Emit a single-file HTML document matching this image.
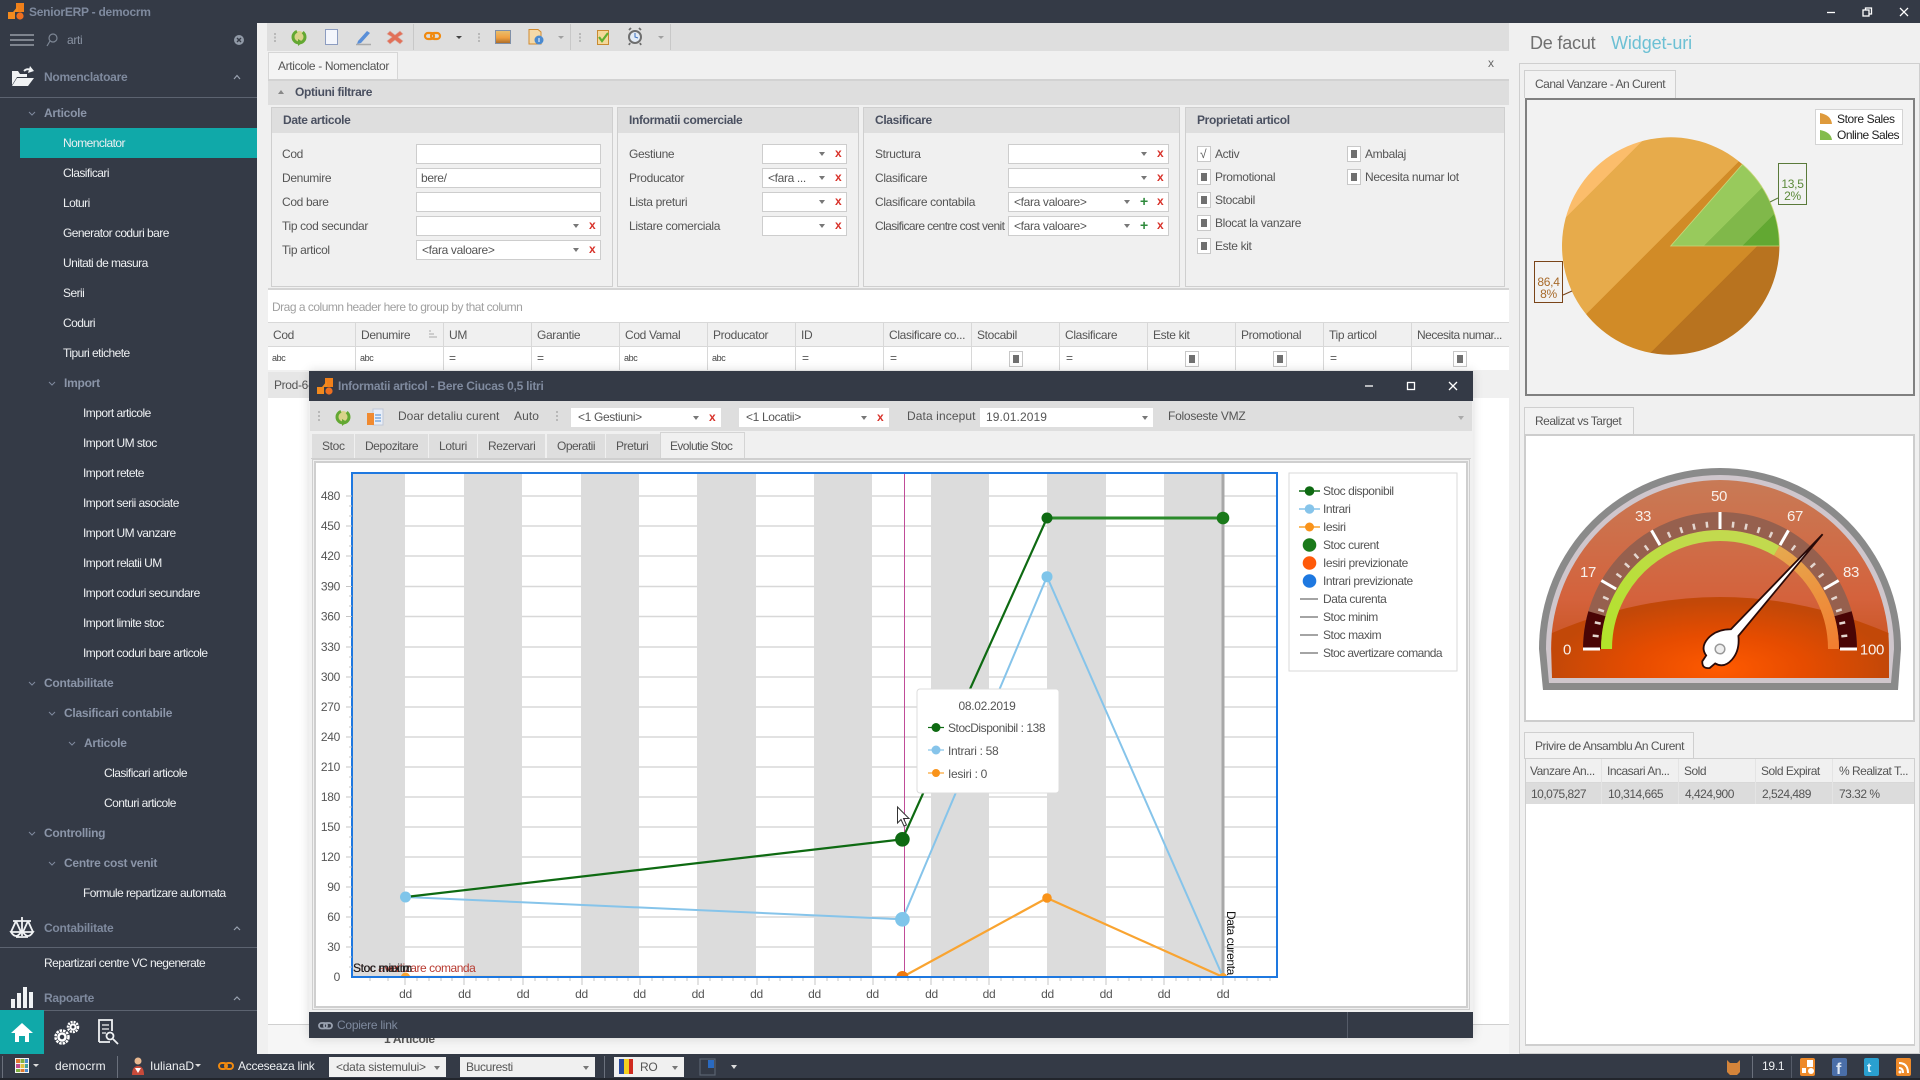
<!DOCTYPE html>
<html><head><meta charset="utf-8"><title>SeniorERP - democrm</title>
<style>
html,body{margin:0;padding:0;width:1920px;height:1080px;overflow:hidden;background:#343a46;font-family:"Liberation Sans",sans-serif}
.b{position:absolute;box-sizing:border-box}
.t{position:absolute;white-space:nowrap;line-height:16px;font-size:12px;letter-spacing:-.35px;color:#555}
.s{color:#eef0f2;letter-spacing:-.55px}
.u{color:#eef0f2;letter-spacing:-.25px}
.w{letter-spacing:-.5px}
.h{color:#7f8a9e;font-weight:bold;letter-spacing:-.25px}
.i{position:absolute;box-sizing:border-box;background:#fff;border:1px solid #cdcdcd;height:20px}
.a{position:absolute;width:0;height:0;border-left:3px solid transparent;border-right:3px solid transparent;border-top:4px solid #777}
.x{position:absolute;color:#d8322a;font-weight:bold;font-size:12px;line-height:16px}
.p{position:absolute;color:#2f8a3c;font-weight:bold;font-size:14px;line-height:16px}
.c{position:absolute;box-sizing:border-box;width:14px;height:16px;background:#fff;border:1px solid #c8c8c8}
.c:after{content:"";position:absolute;left:3px;top:3px;width:6px;height:8px;background:#707070}
.c.n:after{display:none}
svg{position:absolute;left:0;top:0}
svg text{font-family:"Liberation Sans",sans-serif;letter-spacing:-.3px}
</style></head><body>

<!-- main -->
<div class="b" style="left:257px;top:23px;width:1253px;height:1031px;background:#f0f0f0"></div>
<div class="b" style="left:267px;top:23px;width:1242px;height:28px;background:#dedede"></div>
<div class="b" style="left:268px;top:52px;width:130px;height:28px;background:#f4f4f4;border:1px solid #d6d6d6;border-bottom:0"></div>
<div class="t" style="left:278px;top:58px">Articole - Nomenclator</div>
<div class="t" style="left:1488px;top:55px;color:#666">x</div>
<div class="b" style="left:268px;top:79px;width:1241px;height:26px;background:#dedede;border-top:2px solid #d2d2d2"></div>
<div class="t" style="left:295px;top:84px;font-weight:bold;color:#4a5060">Optiuni filtrare</div>
<div class="b" style="left:278px;top:90px;border-left:3px solid transparent;border-right:3px solid transparent;border-bottom:4px solid #888"></div>
<div class="b" style="left:268px;top:105px;width:1241px;height:185px;background:#f0f0f0;border-bottom:2px solid #d4d4d4"></div>

<!-- group panels -->
<div class="b" style="left:271px;top:107px;width:342px;height:180px;border:1px solid #cfcfcf"></div>
<div class="b" style="left:272px;top:108px;width:340px;height:25px;background:#dedede"></div>
<div class="t" style="left:283px;top:112px;font-weight:bold;color:#4a5060">Date articole</div>
<div class="b" style="left:617px;top:107px;width:242px;height:180px;border:1px solid #cfcfcf"></div>
<div class="b" style="left:618px;top:108px;width:240px;height:25px;background:#dedede"></div>
<div class="t" style="left:629px;top:112px;font-weight:bold;color:#4a5060">Informatii comerciale</div>
<div class="b" style="left:863px;top:107px;width:317px;height:180px;border:1px solid #cfcfcf"></div>
<div class="b" style="left:864px;top:108px;width:315px;height:25px;background:#dedede"></div>
<div class="t" style="left:875px;top:112px;font-weight:bold;color:#4a5060">Clasificare</div>
<div class="b" style="left:1185px;top:107px;width:320px;height:180px;border:1px solid #cfcfcf"></div>
<div class="b" style="left:1186px;top:108px;width:318px;height:25px;background:#dedede"></div>
<div class="t" style="left:1197px;top:112px;font-weight:bold;color:#4a5060">Proprietati articol</div>

<!-- Date articole -->
<div class="t" style="left:282px;top:146px">Cod</div><div class="i" style="left:416px;top:144px;width:185px"></div>
<div class="t" style="left:282px;top:170px">Denumire</div><div class="i" style="left:416px;top:168px;width:185px"></div><div class="t" style="left:421px;top:170px">bere/</div>
<div class="t" style="left:282px;top:194px">Cod bare</div><div class="i" style="left:416px;top:192px;width:185px"></div>
<div class="t" style="left:282px;top:218px">Tip cod secundar</div><div class="i" style="left:416px;top:216px;width:185px"></div><div class="a" style="left:573px;top:224px"></div><div class="x" style="left:589px;top:217px">x</div>
<div class="t" style="left:282px;top:242px">Tip articol</div><div class="i" style="left:416px;top:240px;width:185px"></div><div class="t" style="left:422px;top:242px">&lt;fara valoare&gt;</div><div class="a" style="left:573px;top:248px"></div><div class="x" style="left:589px;top:241px">x</div>

<!-- Informatii -->
<div class="t" style="left:629px;top:146px">Gestiune</div><div class="i" style="left:762px;top:144px;width:85px"></div><div class="a" style="left:819px;top:152px"></div><div class="x" style="left:835px;top:145px">x</div>
<div class="t" style="left:629px;top:170px">Producator</div><div class="i" style="left:762px;top:168px;width:85px"></div><div class="t" style="left:768px;top:170px">&lt;fara ...</div><div class="a" style="left:819px;top:176px"></div><div class="x" style="left:835px;top:169px">x</div>
<div class="t" style="left:629px;top:194px">Lista preturi</div><div class="i" style="left:762px;top:192px;width:85px"></div><div class="a" style="left:819px;top:200px"></div><div class="x" style="left:835px;top:193px">x</div>
<div class="t" style="left:629px;top:218px">Listare comerciala</div><div class="i" style="left:762px;top:216px;width:85px"></div><div class="a" style="left:819px;top:224px"></div><div class="x" style="left:835px;top:217px">x</div>

<!-- Clasificare -->
<div class="t" style="left:875px;top:146px">Structura</div><div class="i" style="left:1008px;top:144px;width:161px"></div><div class="a" style="left:1141px;top:152px"></div><div class="x" style="left:1157px;top:145px">x</div>
<div class="t" style="left:875px;top:170px">Clasificare</div><div class="i" style="left:1008px;top:168px;width:161px"></div><div class="a" style="left:1141px;top:176px"></div><div class="x" style="left:1157px;top:169px">x</div>
<div class="t" style="left:875px;top:194px">Clasificare contabila</div><div class="i" style="left:1008px;top:192px;width:161px"></div><div class="t" style="left:1014px;top:194px">&lt;fara valoare&gt;</div><div class="a" style="left:1124px;top:200px"></div><div class="p" style="left:1140px;top:193px">+</div><div class="x" style="left:1157px;top:193px">x</div>
<div class="t" style="left:875px;top:218px;letter-spacing:-.6px">Clasificare centre cost venit</div><div class="i" style="left:1008px;top:216px;width:161px"></div><div class="t" style="left:1014px;top:218px">&lt;fara valoare&gt;</div><div class="a" style="left:1124px;top:224px"></div><div class="p" style="left:1140px;top:217px">+</div><div class="x" style="left:1157px;top:217px">x</div>

<!-- Proprietati -->
<div class="c n" style="left:1197px;top:146px"></div><div class="t" style="left:1200px;top:146px">&#8730;</div><div class="t" style="left:1215px;top:146px">Activ</div>
<div class="c" style="left:1197px;top:169px"></div><div class="t" style="left:1215px;top:169px">Promotional</div>
<div class="c" style="left:1197px;top:192px"></div><div class="t" style="left:1215px;top:192px">Stocabil</div>
<div class="c" style="left:1197px;top:215px"></div><div class="t" style="left:1215px;top:215px">Blocat la vanzare</div>
<div class="c" style="left:1197px;top:238px"></div><div class="t" style="left:1215px;top:238px">Este kit</div>
<div class="c" style="left:1347px;top:146px"></div><div class="t" style="left:1365px;top:146px">Ambalaj</div>
<div class="c" style="left:1347px;top:169px"></div><div class="t" style="left:1365px;top:169px">Necesita numar lot</div>

<!-- grid -->
<div class="b" style="left:268px;top:290px;width:1241px;height:734px;background:#fff"></div>
<div class="t w" style="left:272px;top:299px;color:#a0a0a0">Drag a column header here to group by that column</div>
<div class="b" style="left:268px;top:322px;width:1241px;height:25px;background:#f0f0f0;border-top:1px solid #d8d8d8;border-bottom:1px solid #d8d8d8"></div>
<div class="b" style="left:268px;top:370px;width:1241px;height:28px;background:#f0f0f0"></div>
<div class="b" style="left:268px;top:372px;width:41px;height:26px;background:#e6e6e6"></div>
<div class="t" style="left:274px;top:377px">Prod-6-</div>
<div class="b" style="left:355px;top:322px;width:1px;height:48px;background:#d8d8d8"></div>
<div class="b" style="left:443px;top:322px;width:1px;height:48px;background:#d8d8d8"></div>
<div class="b" style="left:531px;top:322px;width:1px;height:48px;background:#d8d8d8"></div>
<div class="b" style="left:619px;top:322px;width:1px;height:48px;background:#d8d8d8"></div>
<div class="b" style="left:707px;top:322px;width:1px;height:48px;background:#d8d8d8"></div>
<div class="b" style="left:795px;top:322px;width:1px;height:48px;background:#d8d8d8"></div>
<div class="b" style="left:883px;top:322px;width:1px;height:48px;background:#d8d8d8"></div>
<div class="b" style="left:971px;top:322px;width:1px;height:48px;background:#d8d8d8"></div>
<div class="b" style="left:1059px;top:322px;width:1px;height:48px;background:#d8d8d8"></div>
<div class="b" style="left:1147px;top:322px;width:1px;height:48px;background:#d8d8d8"></div>
<div class="b" style="left:1235px;top:322px;width:1px;height:48px;background:#d8d8d8"></div>
<div class="b" style="left:1323px;top:322px;width:1px;height:48px;background:#d8d8d8"></div>
<div class="b" style="left:1411px;top:322px;width:1px;height:48px;background:#d8d8d8"></div>
<div class="t" style="left:273px;top:327px">Cod</div>
<div class="t" style="left:361px;top:327px">Denumire</div>
<div class="t" style="left:449px;top:327px">UM</div>
<div class="t" style="left:537px;top:327px">Garantie</div>
<div class="t" style="left:625px;top:327px">Cod Vamal</div>
<div class="t" style="left:713px;top:327px">Producator</div>
<div class="t" style="left:801px;top:327px">ID</div>
<div class="t" style="left:889px;top:327px">Clasificare co...</div>
<div class="t" style="left:977px;top:327px">Stocabil</div>
<div class="t" style="left:1065px;top:327px">Clasificare</div>
<div class="t" style="left:1153px;top:327px">Este kit</div>
<div class="t" style="left:1241px;top:327px">Promotional</div>
<div class="t" style="left:1329px;top:327px">Tip articol</div>
<div class="t w" style="left:1417px;top:327px">Necesita numar...</div>
<div class="t" style="left:272px;top:350px;font-size:9px;color:#444">abc</div>
<div class="t" style="left:360px;top:350px;font-size:9px;color:#444">abc</div>
<div class="t" style="left:624px;top:350px;font-size:9px;color:#444">abc</div>
<div class="t" style="left:712px;top:350px;font-size:9px;color:#444">abc</div>
<div class="t" style="left:449px;top:350px">=</div>
<div class="t" style="left:537px;top:350px">=</div>
<div class="t" style="left:802px;top:350px">=</div>
<div class="t" style="left:890px;top:350px">=</div>
<div class="t" style="left:1066px;top:350px">=</div>
<div class="t" style="left:1330px;top:350px">=</div>
<div class="c" style="left:1009px;top:351px"></div>
<div class="c" style="left:1185px;top:351px"></div>
<div class="c" style="left:1273px;top:351px"></div>
<div class="c" style="left:1453px;top:351px"></div>
<div class="b" style="left:268px;top:1024px;width:1241px;height:1px;background:#d0d0d0"></div>
<div class="b" style="left:268px;top:1025px;width:1241px;height:29px;background:#f6f6f6"></div>
<div class="t" style="left:384px;top:1031px;font-weight:bold;color:#555">1 Articole</div>

<!-- right panel -->
<div class="b" style="left:1510px;top:23px;width:410px;height:1031px;background:#f0f0f0"></div>
<div class="t" style="left:1530px;top:32px;font-size:18px;line-height:22px;letter-spacing:-.2px;color:#707070">De facut</div>
<div class="t" style="left:1611px;top:32px;font-size:18px;line-height:22px;letter-spacing:-.1px;color:#6cc0d4">Widget-uri</div>
<div class="b" style="left:1519px;top:63px;width:401px;height:991px;border:1px solid #cfcfcf"></div>
<div class="b" style="left:1524px;top:70px;width:152px;height:28px;background:#f2f2f2;border:1px solid #cfcfcf;border-bottom:0"></div>
<div class="t w" style="left:1535px;top:76px">Canal Vanzare - An Curent</div>
<div class="b" style="left:1525px;top:98px;width:390px;height:298px;background:#f2f2f2;border:2px solid #808080"></div>
<div class="b" style="left:1524px;top:407px;width:110px;height:27px;background:#f2f2f2;border:1px solid #cfcfcf;border-bottom:0"></div>
<div class="t w" style="left:1535px;top:413px">Realizat vs Target</div>
<div class="b" style="left:1524px;top:434px;width:391px;height:288px;background:#fff;border:2px solid #cdcdcd"></div>
<div class="b" style="left:1524px;top:732px;width:170px;height:27px;background:#f2f2f2;border:1px solid #cfcfcf;border-bottom:0"></div>
<div class="t w" style="left:1535px;top:738px">Privire de Ansamblu An Curent</div>
<div class="b" style="left:1525px;top:758px;width:390px;height:288px;background:#fff;border:1px solid #cfcfcf;border-bottom:2px solid #cfcfcf"></div>
<div class="b" style="left:1526px;top:759px;width:388px;height:24px;background:#f0f0f0;border-bottom:1px solid #d8d8d8"></div>
<div class="b" style="left:1526px;top:783px;width:388px;height:21px;background:#dcdcdc"></div>
<div class="b" style="left:1601px;top:759px;width:1px;height:45px;background:#e4e4e4"></div>
<div class="b" style="left:1678px;top:759px;width:1px;height:45px;background:#e4e4e4"></div>
<div class="b" style="left:1755px;top:759px;width:1px;height:45px;background:#e4e4e4"></div>
<div class="b" style="left:1832px;top:759px;width:1px;height:45px;background:#e4e4e4"></div>
<div class="t w" style="left:1530px;top:763px">Vanzare An...</div>
<div class="t w" style="left:1607px;top:763px">Incasari An...</div>
<div class="t w" style="left:1684px;top:763px">Sold</div>
<div class="t w" style="left:1761px;top:763px">Sold Expirat</div>
<div class="t w" style="left:1839px;top:763px">% Realizat T...</div>
<div class="t w" style="left:1531px;top:786px">10,075,827</div>
<div class="t w" style="left:1608px;top:786px">10,314,665</div>
<div class="t w" style="left:1685px;top:786px">4,424,900</div>
<div class="t w" style="left:1762px;top:786px">2,524,489</div>
<div class="t w" style="left:1839px;top:786px">73.32 %</div>
<div class="b" style="left:1815px;top:109px;width:88px;height:36px;background:#fff;border:1px solid #d4d4d4"></div>
<div class="t" style="left:1837px;top:111px;letter-spacing:-.4px;color:#222">Store Sales</div>
<div class="t" style="left:1837px;top:127px;letter-spacing:-.5px;color:#222">Online Sales</div>

<!-- sidebar -->
<div class="t" style="left:29px;top:4px;font-weight:bold;color:#7f8a9e;letter-spacing:-.25px">SeniorERP - democrm</div>
<div class="t" style="left:67px;top:32px;color:#8a93a3">arti</div>
<div class="t h" style="left:44px;top:69px">Nomenclatoare</div>
<div class="b" style="left:0;top:97px;width:257px;height:1px;background:#5c6370"></div>
<div class="t h" style="left:44px;top:105px;color:#8b95a8">Articole</div>
<div class="b" style="left:20px;top:128px;width:237px;height:30px;background:#10a9a9"></div>
<div class="t s" style="left:63px;top:135px">Nomenclator</div>
<div class="t s" style="left:63px;top:165px">Clasificari</div>
<div class="t s" style="left:63px;top:195px">Loturi</div>
<div class="t s" style="left:63px;top:225px">Generator coduri bare</div>
<div class="t s" style="left:63px;top:255px">Unitati de masura</div>
<div class="t s" style="left:63px;top:285px">Serii</div>
<div class="t s" style="left:63px;top:315px">Coduri</div>
<div class="t s" style="left:63px;top:345px">Tipuri etichete</div>
<div class="t h" style="left:64px;top:375px;color:#8b95a8">Import</div>
<div class="t s" style="left:83px;top:405px">Import articole</div>
<div class="t s" style="left:83px;top:435px">Import UM stoc</div>
<div class="t s" style="left:83px;top:465px">Import retete</div>
<div class="t s" style="left:83px;top:495px">Import serii asociate</div>
<div class="t s" style="left:83px;top:525px">Import UM vanzare</div>
<div class="t s" style="left:83px;top:555px">Import relatii UM</div>
<div class="t s" style="left:83px;top:585px">Import coduri secundare</div>
<div class="t s" style="left:83px;top:615px">Import limite stoc</div>
<div class="t s" style="left:83px;top:645px">Import coduri bare articole</div>
<div class="t h" style="left:44px;top:675px;color:#8b95a8">Contabilitate</div>
<div class="t h" style="left:64px;top:705px;color:#8b95a8">Clasificari contabile</div>
<div class="t h" style="left:84px;top:735px;color:#8b95a8">Articole</div>
<div class="t s" style="left:104px;top:765px">Clasificari articole</div>
<div class="t s" style="left:104px;top:795px">Conturi articole</div>
<div class="t h" style="left:44px;top:825px;color:#8b95a8">Controlling</div>
<div class="t h" style="left:64px;top:855px;color:#8b95a8">Centre cost venit</div>
<div class="t s" style="left:83px;top:885px">Formule repartizare automata</div>
<div class="t h" style="left:44px;top:920px">Contabilitate</div>
<div class="b" style="left:0;top:947px;width:257px;height:1px;background:#5c6370"></div>
<div class="t s" style="left:44px;top:955px">Repartizari centre VC negenerate</div>
<div class="t h" style="left:44px;top:990px">Rapoarte</div>
<div class="b" style="left:0;top:1010px;width:257px;height:1px;background:#5c6370"></div>
<div class="b" style="left:0;top:1010px;width:44px;height:44px;background:#10a9a9"></div>

<!-- status bar -->
<div class="b" style="left:0;top:1054px;width:1920px;height:24px;background:#343a46"></div>
<div class="b" style="left:0;top:1078px;width:1920px;height:2px;background:#22252c"></div>
<div class="b" style="left:2px;top:1056px;width:1px;height:22px;background:#6a707c"></div>
<div class="t u" style="left:55px;top:1058px;letter-spacing:.1px">democrm</div>
<div class="b" style="left:117px;top:1056px;width:1px;height:22px;background:#6a707c"></div>
<div class="t u" style="left:150px;top:1058px;letter-spacing:0">IulianaD</div>
<div class="t u" style="left:238px;top:1058px">Acceseaza link</div>
<div class="b" style="left:329px;top:1057px;width:117px;height:20px;background:#f0f0f0"></div>
<div class="t" style="left:336px;top:1059px;letter-spacing:-.25px">&lt;data sistemului&gt;</div><div class="a" style="left:434px;top:1066px"></div>
<div class="b" style="left:460px;top:1057px;width:135px;height:20px;background:#f0f0f0"></div>
<div class="t" style="left:466px;top:1059px">Bucuresti</div><div class="a" style="left:583px;top:1066px"></div>
<div class="b" style="left:604px;top:1056px;width:1px;height:22px;background:#6a707c"></div>
<div class="b" style="left:614px;top:1057px;width:70px;height:20px;background:#f0f0f0"></div>
<div class="t" style="left:640px;top:1059px">RO</div><div class="a" style="left:672px;top:1066px"></div>
<div class="a" style="left:731px;top:1065px;border-top-color:#ddd"></div>
<div class="b" style="left:1752px;top:1056px;width:1px;height:22px;background:#6a707c"></div>
<div class="t u" style="left:1762px;top:1058px">19.1</div>
<div class="b" style="left:1791px;top:1056px;width:1px;height:22px;background:#555b68"></div>

<!-- page-level svg -->
<svg width="1920" height="1080" viewBox="0 0 1920 1080">
<defs>
<linearGradient id="po" gradientUnits="userSpaceOnUse" x1="1560" y1="140" x2="1780" y2="360">
<stop offset=".189" stop-color="#fbbd6b"/><stop offset=".189" stop-color="#e7ab4b"/><stop offset=".455" stop-color="#e7ab4b"/><stop offset=".455" stop-color="#d18b27"/><stop offset=".689" stop-color="#d18b27"/><stop offset=".689" stop-color="#b8731f"/>
</linearGradient>
<linearGradient id="pg" gradientUnits="userSpaceOnUse" x1="1560" y1="140" x2="1780" y2="360">
<stop offset=".568" stop-color="#98ca5c"/><stop offset=".568" stop-color="#80b84a"/><stop offset=".655" stop-color="#80b84a"/><stop offset=".655" stop-color="#62a832"/>
</linearGradient>
<linearGradient id="gf" x1="0" y1="0" x2="0" y2="1"><stop offset="0" stop-color="#c87a56"/><stop offset=".6" stop-color="#d4623c"/><stop offset="1" stop-color="#c44c12"/></linearGradient>
<radialGradient id="gb" gradientUnits="userSpaceOnUse" cx="1720" cy="672" r="170" gradientTransform="translate(0 400) scale(1 .4)"><stop offset="0" stop-color="#ff5a00"/><stop offset=".5" stop-color="#e64c00"/><stop offset="1" stop-color="#c24808"/></radialGradient>
<linearGradient id="gg" gradientUnits="userSpaceOnUse" x1="1606" y1="649" x2="1700" y2="535"><stop offset="0" stop-color="#b2e32a"/><stop offset="1" stop-color="#c2da4e"/></linearGradient>
<linearGradient id="go" gradientUnits="userSpaceOnUse" x1="1780" y1="550" x2="1830" y2="649"><stop offset="0" stop-color="#e6a84e"/><stop offset="1" stop-color="#f27e30"/></linearGradient>
<linearGradient id="img" x1="0" y1="0" x2="0" y2="1"><stop offset="0" stop-color="#e8c070"/><stop offset=".55" stop-color="#f0a040"/><stop offset="1" stop-color="#a86a28"/></linearGradient>
</defs>

<!-- title logo and window buttons -->
<rect x="8" y="12" width="7" height="7" fill="#f28a1e"/><rect x="16" y="3" width="8" height="9" fill="#f0801a"/><circle cx="20" cy="16" r="3.6" fill="#ee6f20"/><path d="M13 12 L18 6 L18 12Z" fill="#f28a1e"/>
<g stroke="#fff" stroke-width="1.3" fill="none"><path d="M1827 12.5H1835"/><rect x="1863" y="10" width="6" height="6"/><path d="M1865.5 10V8H1871.5V14H1869"/><path d="M1900 8L1908 16M1908 8L1900 16"/></g>

<!-- sidebar search and icons -->
<g stroke="#aab0ba" stroke-width="1.2"><path d="M10 35H34M10 40H34M10 45H34"/></g>
<g stroke="#7d8694" stroke-width="1.2" fill="none"><circle cx="53" cy="38" r="4"/><path d="M50 41L47 46"/></g>
<circle cx="239" cy="40" r="5" fill="#9099a6"/><path d="M237 38L241 42M241 38L237 42" stroke="#343a46" stroke-width="1.4"/>
<path d="M12 85V71H18L20 74H27V77H17Z" fill="#f0f2f4"/><path d="M17 78H34L28 86H12Z" fill="#f0f2f4"/><path d="M24 71Q27 68 31 70" fill="none" stroke="#f0f2f4" stroke-width="1.8"/><path d="M30 66L34 71L28 73Z" fill="#f0f2f4"/>
<path d="M234 79L237 75.500L240 79" fill="none" stroke="#9aa2b0" stroke-width="1.2"/>
<path d="M29 112L32 115L35 112" fill="none" stroke="#7f8a9e" stroke-width="1"/>
<path d="M49 382L52 385L55 382" fill="none" stroke="#7f8a9e" stroke-width="1"/>
<path d="M29 682L32 685L35 682" fill="none" stroke="#7f8a9e" stroke-width="1"/>
<path d="M49 712L52 715L55 712" fill="none" stroke="#7f8a9e" stroke-width="1"/>
<path d="M69 742L72 745L75 742" fill="none" stroke="#7f8a9e" stroke-width="1"/>
<path d="M29 832L32 835L35 832" fill="none" stroke="#7f8a9e" stroke-width="1"/>
<path d="M49 862L52 865L55 862" fill="none" stroke="#7f8a9e" stroke-width="1"/>
<g fill="none" stroke="#f0f2f4" stroke-width="1.8"><path d="M13 921H31M22 917V936M16 921L11 932M16 921L21 932M28 921L23 932M28 921L33 932"/><path d="M11 932Q16 940 21 932ZM23 932Q28 940 33 932ZM16 937H28"/></g>
<path d="M234 930L237 927L240 930" fill="none" stroke="#9aa2b0" stroke-width="1.2"/>
<path d="M234 1000L237 997L240 1000" fill="none" stroke="#9aa2b0" stroke-width="1.2"/>
<g fill="#f0f2f4"><rect x="11" y="999" width="4" height="9"/><rect x="17" y="993" width="4" height="15"/><rect x="23" y="987" width="4" height="21"/><rect x="29" y="992" width="4" height="16"/></g>
<path d="M22 1023L33 1033H29V1042H25V1036H19V1042H15V1033H11Z" fill="#fff"/>
<g fill="none" stroke="#fff"><circle cx="62" cy="1037" r="6.500" stroke-width="2.500" stroke-dasharray="2.500 1"/><circle cx="62" cy="1037" r="3.500" stroke-width="2.500"/><circle cx="73" cy="1027" r="5" stroke-width="2.500" stroke-dasharray="2 1"/><circle cx="73" cy="1027" r="2.500" stroke-width="2"/></g>
<g fill="none" stroke="#f0f2f4" stroke-width="1.8"><path d="M99 1042V1020H112V1031M99 1042H110"/><path d="M102 1025H109M102 1029H109M102 1033H106" stroke-width="1.2"/><circle cx="110" cy="1036" r="3.500"/><path d="M113 1039L118 1044"/></g>

<!-- main toolbar icons -->
<g fill="#b8b8b8"><rect x="274" y="33" width="2" height="2"/><rect x="274" y="36.500" width="2" height="2"/><rect x="274" y="40" width="2" height="2"/><rect x="478" y="33" width="2" height="2"/><rect x="478" y="36.500" width="2" height="2"/><rect x="478" y="40" width="2" height="2"/><rect x="579" y="33" width="2" height="2"/><rect x="579" y="36.500" width="2" height="2"/><rect x="579" y="40" width="2" height="2"/></g>
<circle cx="299" cy="37" r="6" fill="#d9d38a" stroke="#63a832" stroke-width="3" stroke-dasharray="26 6"/><path d="M303 42L298 46V39Z" fill="#63a832"/>
<rect x="325.500" y="29.500" width="12" height="15" fill="#f4f6fc" stroke="#8c9cc0"/>
<path d="M358 41L367 31L370 33L361 43L357 44Z" fill="#5a8fd8"/><path d="M356 44.500H371" stroke="#aaa" stroke-width="1.500"/>
<path d="M390 31L395 35L400 31L403 34L398 37L403 41L400 44L395 40L390 44L387 41L392 37L387 34Z" fill="#e27058" stroke="#d8b0a8" stroke-width=".6"/>
<rect x="413" y="24" width="1" height="26" fill="#c8c8c8"/>
<rect x="425" y="33" width="9" height="6" rx="3" fill="none" stroke="#f08a10" stroke-width="2.200"/><rect x="431" y="33" width="9" height="6" rx="3" fill="none" stroke="#f08a10" stroke-width="2.200"/>
<path d="M456 36H462L459 39Z" fill="#444"/>
<rect x="495.500" y="30.500" width="15" height="13" fill="url(#img)" stroke="#8090a8"/>
<path d="M529 29.500H538L541 32V44H529Z" fill="#f4d9a8" stroke="#d08a30"/><circle cx="539" cy="40" r="4.500" fill="#4a8ad0"/><path d="M539 38V42" stroke="#fff"/>
<path d="M558 36H564L561 39Z" fill="#a0a0a0"/>
<rect x="570" y="24" width="1" height="26" fill="#c8c8c8"/>
<rect x="597.500" y="30.500" width="11" height="14" fill="#f4d89a" stroke="#c88a30"/><path d="M599 37L602 41L608 33" fill="none" stroke="#5fb030" stroke-width="2.200"/>
<circle cx="635" cy="37" r="6" fill="#e4ecf6" stroke="#6e6e6e" stroke-width="2"/><path d="M635 33V37L638 38" fill="none" stroke="#3a70c0"/><path d="M629 30L631 28M641 30L639 28M630 43L629 45M640 43L641 45" stroke="#6e6e6e" stroke-width="1.800"/>
<path d="M658 36H664L661 39Z" fill="#a0a0a0"/>
<rect x="670" y="24" width="1" height="26" fill="#c8c8c8"/>
<path d="M429 331H431M429 334H434M429 337H437" stroke="#aaa" stroke-width="1"/>

<!-- pie -->
<path d="M1670.700 246 L1742.400 164.300 A108.700 108.700 0 1 0 1779.400 246 Z" fill="url(#po)"/>
<path d="M1670.700 246 L1779.400 246 A108.700 108.700 0 0 0 1742.400 164.300 Z" fill="url(#pg)" stroke="#c9d77a" stroke-width=".8"/>
<path d="M1770 202L1778 198" stroke="#5a7a3a"/><rect x="1778.500" y="163.500" width="28" height="41" fill="#f2f2f2" stroke="#5a7a3a"/>
<text x="1792.500" y="188" font-size="12" text-anchor="middle" fill="#5c8a3a">13,5</text><text x="1792.500" y="200" font-size="12" text-anchor="middle" fill="#5c8a3a">2%</text>
<path d="M1563 295L1572 291" stroke="#7a4418"/><rect x="1534.500" y="261.500" width="28" height="41" fill="#f2f2f2" stroke="#7a4418"/>
<text x="1548.500" y="286" font-size="12" text-anchor="middle" fill="#a86a2a">86,4</text><text x="1548.500" y="298" font-size="12" text-anchor="middle" fill="#a86a2a">8%</text>
<path d="M1820 113V124H1832Q1831 115 1820 113Z" fill="#de9a3c"/>
<path d="M1820 130V140H1832Q1831 132 1820 130Z" fill="#84bc4c"/>

<!-- gauge -->
<path d="M1539 649A181 181 0 0 1 1901 649L1898 690H1543Z" fill="#8a8a8a"/>
<path d="M1546 649A174 174 0 0 1 1894 649L1891 683H1549Z" fill="#cfc6cc"/>
<path d="M1551 649A169 169 0 0 1 1889 649L1889 678H1552Z" fill="url(#gf)"/>
<path d="M1552 633Q1720 561 1888.500 633L1889 678H1552Z" fill="url(#gb)"/>
<path d="M1592 649A128 128 0 0 1 1848 649" fill="none" stroke="#96604e" stroke-width="18"/>
<path d="M1592 649A128 128 0 0 1 1597 613.700" fill="none" stroke="#4a0505" stroke-width="18"/>
<path d="M1843 613.700A128 128 0 0 1 1848 649" fill="none" stroke="#4a0505" stroke-width="18"/>
<path d="M1606.500 649A113.500 113.500 0 0 1 1776.750 550.700" fill="none" stroke="url(#gg)" stroke-width="11"/>
<path d="M1776.750 550.700A113.500 113.500 0 0 1 1833.500 649" fill="none" stroke="url(#go)" stroke-width="11"/>
<g stroke="#e4d6cf" stroke-width="2.500">
<path d="M1598 649H1592" transform="rotate(6 1720 649)"/><path d="M1598 649H1592" transform="rotate(12 1720 649)"/><path d="M1598 649H1592" transform="rotate(18 1720 649)"/><path d="M1598 649H1592" transform="rotate(24 1720 649)"/>
<path d="M1598 649H1592" transform="rotate(36 1720 649)"/><path d="M1598 649H1592" transform="rotate(42 1720 649)"/><path d="M1598 649H1592" transform="rotate(48 1720 649)"/><path d="M1598 649H1592" transform="rotate(54 1720 649)"/>
<path d="M1598 649H1592" transform="rotate(66 1720 649)"/><path d="M1598 649H1592" transform="rotate(72 1720 649)"/><path d="M1598 649H1592" transform="rotate(78 1720 649)"/><path d="M1598 649H1592" transform="rotate(84 1720 649)"/>
<path d="M1598 649H1592" transform="rotate(96 1720 649)"/><path d="M1598 649H1592" transform="rotate(102 1720 649)"/><path d="M1598 649H1592" transform="rotate(108 1720 649)"/><path d="M1598 649H1592" transform="rotate(114 1720 649)"/>
<path d="M1598 649H1592" transform="rotate(126 1720 649)"/><path d="M1598 649H1592" transform="rotate(132 1720 649)"/><path d="M1598 649H1592" transform="rotate(138 1720 649)"/><path d="M1598 649H1592" transform="rotate(144 1720 649)"/>
<path d="M1598 649H1592" transform="rotate(156 1720 649)"/><path d="M1598 649H1592" transform="rotate(162 1720 649)"/><path d="M1598 649H1592" transform="rotate(168 1720 649)"/><path d="M1598 649H1592" transform="rotate(174 1720 649)"/>
</g>
<g stroke="#fff" stroke-width="3">
<path d="M1600 649H1583"/><path d="M1600 649H1583" transform="rotate(30 1720 649)"/><path d="M1600 649H1583" transform="rotate(60 1720 649)"/><path d="M1600 649H1583" transform="rotate(90 1720 649)"/><path d="M1600 649H1583" transform="rotate(120 1720 649)"/><path d="M1600 649H1583" transform="rotate(150 1720 649)"/><path d="M1600 649H1583" transform="rotate(180 1720 649)"/>
</g>
<g fill="#f8f0ea" font-size="15" text-anchor="middle">
<text x="1567" y="654.500">0</text><text x="1588" y="577">17</text><text x="1643" y="521">33</text><text x="1719" y="501">50</text><text x="1795" y="521">67</text><text x="1851" y="577">83</text><text x="1872" y="654.500">100</text>
</g>
<g transform="translate(1720 649) rotate(-48.200)">
<path d="M154 0L22 -5Q12 -16 0 -16Q-12 -16 -14 -6L-21 -5Q-27 0 -21 5L-14 6Q-12 16 0 16Q12 16 22 5Z" fill="#fff" stroke="#2a0a08" stroke-width="1.800"/>
<circle r="4.800" fill="#eee" stroke="#999" stroke-width="1.500"/>
</g>

<!-- statusbar icons -->
<g><rect x="15" y="1058" width="14" height="15" fill="#f4f4f4"/><rect x="16" y="1059" width="4" height="4" fill="#e07a30"/><rect x="20.500" y="1059" width="4" height="4" fill="#80b040"/><rect x="25" y="1059" width="3" height="4" fill="#4a8ad0"/><rect x="16" y="1064" width="4" height="4" fill="#c04a8a"/><rect x="20.500" y="1064" width="4" height="4" fill="#e0c040"/><rect x="25" y="1064" width="3" height="4" fill="#40a0a0"/><rect x="16" y="1069" width="4" height="3" fill="#80b040"/><rect x="20.500" y="1069" width="4" height="3" fill="#e07a30"/><rect x="25" y="1069" width="3" height="3" fill="#4a8ad0"/></g>
<path d="M33 1064H39L36 1067Z" fill="#ddd"/>
<circle cx="138" cy="1061" r="3.500" fill="#e8b890"/><path d="M132 1075Q132 1066 138 1066Q144 1066 144 1075Z" fill="#c84a3a"/><path d="M135 1068L138 1073L141 1068" fill="#fff"/>
<path d="M195 1064H201L198 1067Z" fill="#ddd"/>
<rect x="219" y="1063" width="8" height="6" rx="3" fill="none" stroke="#f08a10" stroke-width="2"/><rect x="225" y="1063" width="8" height="6" rx="3" fill="none" stroke="#f08a10" stroke-width="2"/>
<rect x="619" y="1059" width="5" height="15" fill="#2a4aa0"/><rect x="624" y="1059" width="5" height="15" fill="#f4d020"/><rect x="629" y="1059" width="4" height="15" fill="#d02a20"/>
<rect x="700" y="1059" width="15" height="16" fill="none" stroke="#5a6270" stroke-width="1.200"/><rect x="708" y="1060" width="6" height="8" fill="#2a6ac0"/>
<path d="M1727 1060L1730 1063H1737L1740 1060L1740 1072L1737 1075H1730L1727 1072Z" fill="#d4843a"/>
<rect x="1800" y="1058" width="15" height="18" rx="2" fill="#ee8a2a"/><rect x="1807" y="1060" width="6" height="7" fill="#fff"/><circle cx="1811" cy="1071" r="3" fill="#fff"/><rect x="1802" y="1068" width="4" height="5" fill="#fff"/>
<rect x="1832" y="1058" width="15" height="18" rx="2" fill="#4a6ea8"/><text x="1836" y="1074" font-size="16" font-weight="bold" fill="#dfe8f4">f</text>
<rect x="1864" y="1058" width="15" height="18" rx="2" fill="#2aa0d0"/><text x="1867" y="1072" font-size="13" font-weight="bold" fill="#dff4ff">t</text>
<rect x="1896" y="1058" width="15" height="18" rx="2" fill="#ee8a2a"/><path d="M1899 1063Q1908 1063 1908 1073M1899 1068Q1903 1068 1903 1073" fill="none" stroke="#fff" stroke-width="2"/><circle cx="1900" cy="1072" r="1.500" fill="#fff"/>
</svg>

<!-- modal -->
<div class="b" style="left:309px;top:371px;width:1164px;height:667px;background:#f0f0f0;box-shadow:0 0 10px rgba(0,0,0,.15)"></div>
<div class="b" style="left:309px;top:371px;width:1164px;height:30px;background:#343a46"></div>
<div class="t" style="left:338px;top:378px;font-weight:bold;color:#7f8a9e;letter-spacing:-.25px">Informatii articol - Bere Ciucas 0,5 litri</div>
<div class="b" style="left:310px;top:401px;width:1162px;height:30px;background:#dedede"></div>
<div class="t" style="left:398px;top:408px;letter-spacing:0">Doar detaliu curent</div>
<div class="t" style="left:514px;top:408px;letter-spacing:.1px">Auto</div>
<div class="b" style="left:571px;top:408px;width:150px;height:19px;background:#fff"></div>
<div class="t" style="left:578px;top:409px">&lt;1 Gestiuni&gt;</div><div class="a" style="left:693px;top:416px"></div><div class="x" style="left:709px;top:409px">x</div>
<div class="b" style="left:739px;top:408px;width:150px;height:19px;background:#fff"></div>
<div class="t" style="left:746px;top:409px">&lt;1 Locatii&gt;</div><div class="a" style="left:861px;top:416px"></div><div class="x" style="left:877px;top:409px">x</div>
<div class="t" style="left:907px;top:408px;letter-spacing:.1px">Data inceput</div>
<div class="b" style="left:980px;top:408px;width:173px;height:19px;background:#fff"></div>
<div class="t" style="left:986px;top:409px;letter-spacing:.1px">19.01.2019</div><div class="a" style="left:1142px;top:416px"></div>
<div class="t" style="left:1168px;top:408px;letter-spacing:-.25px">Foloseste VMZ</div><div class="a" style="left:1458px;top:416px;border-top-color:#aaa"></div>

<div class="b" style="left:312px;top:434px;width:42px;height:24px;background:#dedede"></div><div class="t" style="left:322px;top:438px">Stoc</div>
<div class="b" style="left:355px;top:434px;width:73px;height:24px;background:#dedede"></div><div class="t" style="left:365px;top:438px;letter-spacing:-.5px">Depozitare</div>
<div class="b" style="left:429px;top:434px;width:48px;height:24px;background:#dedede"></div><div class="t" style="left:439px;top:438px">Loturi</div>
<div class="b" style="left:478px;top:434px;width:67px;height:24px;background:#dedede"></div><div class="t" style="left:488px;top:438px;letter-spacing:-.45px">Rezervari</div>
<div class="b" style="left:547px;top:434px;width:58px;height:24px;background:#dedede"></div><div class="t" style="left:557px;top:438px;letter-spacing:-.5px">Operatii</div>
<div class="b" style="left:606px;top:434px;width:54px;height:24px;background:#dedede"></div><div class="t" style="left:616px;top:438px;letter-spacing:-.45px">Preturi</div>
<div class="b" style="left:660px;top:432px;width:85px;height:27px;background:#f0f0f0;border:1px solid #d4d4d4;border-bottom:0"></div><div class="t" style="left:670px;top:438px;letter-spacing:-.6px">Evolutie Stoc</div>
<div class="b" style="left:311px;top:458px;width:1160px;height:1px;background:#cfcfcf"></div>
<div class="b" style="left:312px;top:459px;width:1158px;height:551px;background:#f0f0f0;border:1px solid #cfcfcf"></div>
<div class="b" style="left:314px;top:461px;width:1154px;height:547px;background:#fff;border:2px solid #cfcfcf"></div>

<svg width="1920" height="1080" viewBox="0 0 1920 1080">
<rect x="317" y="387" width="7" height="7" fill="#f28a1e"/><rect x="325" y="378" width="8" height="9" fill="#f0801a"/><circle cx="329" cy="391" r="3.600" fill="#ee6f20"/><path d="M322 387L327 381V387Z" fill="#f28a1e"/>
<g stroke="#fff" stroke-width="1.300" fill="none"><path d="M1365 386H1373"/><rect x="1407.500" y="382.500" width="7" height="7"/><path d="M1449 382L1457 390M1457 382L1449 390"/></g>
<g fill="#b8b8b8"><rect x="318" y="411" width="2" height="2"/><rect x="318" y="415" width="2" height="2"/><rect x="318" y="419" width="2" height="2"/><rect x="556" y="411" width="2" height="2"/><rect x="556" y="415" width="2" height="2"/><rect x="556" y="419" width="2" height="2"/></g>
<circle cx="343" cy="417" r="6" fill="#d9d38a" stroke="#63a832" stroke-width="3" stroke-dasharray="26 6"/><path d="M347 422L342 426V419Z" fill="#63a832"/>
<rect x="373" y="409" width="10" height="16" fill="#e8eef8" stroke="#c0c8d8"/><rect x="367" y="413" width="7" height="12" fill="#f08a30"/><path d="M375 415H381M375 418H381M375 421H381" stroke="#4a8ad0"/>

<!-- chart grid -->
<g stroke="#d8d8d8" stroke-width="1.500">
<path d="M352 947H1277M352 917H1277M352 887H1277M352 857H1277M352 827H1277M352 797H1277M352 767H1277M352 737H1277M352 707H1277M352 677H1277M352 647H1277M352 616.500H1277M352 586.500H1277M352 556H1277M352 526H1277M352 496H1277"/>
</g>
<g fill="#dcdcdc">
<rect x="353" y="474" width="52" height="502"/><rect x="464" y="474" width="58" height="502"/><rect x="581" y="474" width="58" height="502"/><rect x="697" y="474" width="59" height="502"/><rect x="814" y="474" width="58" height="502"/><rect x="931" y="474" width="58" height="502"/><rect x="1047" y="474" width="59" height="502"/><rect x="1164" y="474" width="59" height="502"/>
</g>
<rect x="1221.500" y="474" width="3" height="503" fill="#a8a8a8"/>
<path d="M904.500 474V977" stroke="#c04c98" stroke-width="1"/>
<g fill="none" stroke-linejoin="round">
<path d="M405.500 977L902.400 977L1047 898L1223 977" stroke="#f9a431" stroke-width="2.200"/>
<path d="M405.500 897L902.400 919.300L1047 576.700L1223 977" stroke="#86c4ea" stroke-width="2"/>
<path d="M405.500 897L902.400 839.300L1047 518L1223 518" stroke="#0e6a12" stroke-width="2.200"/>
</g>
<path d="M1047 518H1223" stroke="#2a8a2a" stroke-width="3"/>
<text x="353" y="972" font-size="12" fill="#b83a30" style="letter-spacing:-.45px">Stoc avertizare comanda</text>
<text x="353" y="972" font-size="12" fill="#222" style="letter-spacing:-.4px">Stoc maxim</text>
<text x="353" y="972" font-size="12" fill="#222" style="letter-spacing:-.3px">Stoc minim</text>
<circle cx="405.500" cy="977" r="4.500" fill="#f9a431"/>
<circle cx="902.400" cy="977" r="6" fill="#f07a10"/>
<circle cx="1047" cy="898" r="4.800" fill="#f9931a"/>
<circle cx="1223" cy="977" r="4" fill="#f9a431"/>
<rect x="340" y="978" width="950" height="12" fill="#fff"/>
<circle cx="405.500" cy="897" r="5.500" fill="#7fc5ea"/>
<circle cx="902.400" cy="919.300" r="7.300" fill="#7fc5ea"/>
<circle cx="902.400" cy="839.300" r="7.300" fill="#0e6a12"/>
<circle cx="1047" cy="576.700" r="5.500" fill="#7fc5ea"/>
<circle cx="1047" cy="518" r="5.500" fill="#0e6a12"/>
<circle cx="1223" cy="518" r="6.300" fill="#1a7a1a"/>
<path d="M352 473H1277V977H352Z" fill="none" stroke="#1e78e0" stroke-width="2"/>

<!-- axis -->
<g stroke="#c4c4c4" stroke-width="1">
<path d="M346 947H352M346 917H352M346 887H352M346 857H352M346 827H352M346 797H352M346 767H352M346 737H352M346 707H352M346 677H352M346 647H352M346 616.500H352M346 586.500H352M346 556H352M346 526H352M346 496H352"/>
<path d="M349 967H352M349 957H352M349 937H352M349 927H352M349 907H352M349 897H352M349 877H352M349 867H352M349 847H352M349 837H352M349 817H352M349 807H352M349 787H352M349 777H352M349 757H352M349 747H352M349 727H352M349 717H352M349 697H352M349 687H352M349 667H352M349 657H352M349 637H352M349 627H352M349 606H352M349 596H352M349 576H352M349 566H352M349 546H352M349 536H352M349 516H352M349 506H352"/>
<path d="M405 978V985M464 978V985M523 978V985M582 978V985M640 978V985M698 978V985M757 978V985M815 978V985M873 978V985M931 978V985M989 978V985M1048 978V985M1106 978V985M1164 978V985M1223 978V985"/>
<path d="M370 978V981M388 978V981M417 978V981M429 978V981M441 978V981M452 978V981M476 978V981M488 978V981M499 978V981M511 978V981M535 978V981M547 978V981M558 978V981M570 978V981M594 978V981M605 978V981M617 978V981M628 978V981M652 978V981M663 978V981M675 978V981M687 978V981M710 978V981M722 978V981M733 978V981M745 978V981M769 978V981M780 978V981M792 978V981M803 978V981M827 978V981M838 978V981M850 978V981M861 978V981M885 978V981M896 978V981M908 978V981M920 978V981M943 978V981M954 978V981M966 978V981M977 978V981M1001 978V981M1013 978V981M1025 978V981M1036 978V981M1060 978V981M1071 978V981M1083 978V981M1094 978V981M1118 978V981M1129 978V981M1141 978V981M1152 978V981M1176 978V981M1188 978V981M1200 978V981M1211 978V981M1235 978V981M1247 978V981M1258 978V981M1270 978V981"/>
</g>
<g font-size="12" fill="#555" text-anchor="end">
<text x="340" y="981">0</text><text x="340" y="951">30</text><text x="340" y="921">60</text><text x="340" y="891">90</text><text x="340" y="861">120</text><text x="340" y="831">150</text><text x="340" y="801">180</text><text x="340" y="771">210</text><text x="340" y="741">240</text><text x="340" y="711">270</text><text x="340" y="681">300</text><text x="340" y="651">330</text><text x="340" y="620.500">360</text><text x="340" y="590.500">390</text><text x="340" y="560">420</text><text x="340" y="530">450</text><text x="340" y="500">480</text>
</g>
<g font-size="12" fill="#555" text-anchor="middle">
<text x="405.500" y="998">dd</text><text x="464.500" y="998">dd</text><text x="523" y="998">dd</text><text x="581.500" y="998">dd</text><text x="639.500" y="998">dd</text><text x="698" y="998">dd</text><text x="756.500" y="998">dd</text><text x="814.500" y="998">dd</text><text x="872.500" y="998">dd</text><text x="931.500" y="998">dd</text><text x="989" y="998">dd</text><text x="1047.500" y="998">dd</text><text x="1106" y="998">dd</text><text x="1164" y="998">dd</text><text x="1223" y="998">dd</text>
</g>
<text transform="translate(1227 911) rotate(90)" font-size="12" fill="#111" style="letter-spacing:-.4px">Data curenta</text>

<!-- legend -->
<rect x="1289" y="473" width="168" height="198" fill="#fff" stroke="#dadada"/>
<path d="M1299 491H1320" stroke="#0e6a12" stroke-width="1.500"/><circle cx="1309.500" cy="491" r="4.800" fill="#0e6a12"/>
<path d="M1299 509H1320" stroke="#86c4ea" stroke-width="1.500"/><circle cx="1309.500" cy="509" r="4.800" fill="#86c4ea"/>
<path d="M1299 527H1320" stroke="#f9a431" stroke-width="1.500"/><circle cx="1309.500" cy="527" r="4.500" fill="#f9931a"/>
<circle cx="1309.500" cy="545" r="6.800" fill="#1a7a1a"/><circle cx="1309.500" cy="563" r="6.800" fill="#ff5a0a"/><circle cx="1309.500" cy="581" r="6.800" fill="#1e78e0"/>
<path d="M1300 599H1318M1300 617H1318M1300 635H1318M1300 653H1318" stroke="#a4a4a4" stroke-width="2"/>
<g font-size="12" fill="#555" style="letter-spacing:-.45px">
<text x="1323" y="495" style="letter-spacing:-.45px">Stoc disponibil</text><text x="1323" y="513" style="letter-spacing:-.45px">Intrari</text><text x="1323" y="531" style="letter-spacing:-.45px">Iesiri</text><text x="1323" y="549" style="letter-spacing:-.45px">Stoc curent</text><text x="1323" y="567" style="letter-spacing:-.45px">Iesiri previzionate</text><text x="1323" y="585" style="letter-spacing:-.45px">Intrari previzionate</text><text x="1323" y="603" style="letter-spacing:-.45px">Data curenta</text><text x="1323" y="621" style="letter-spacing:-.45px">Stoc minim</text><text x="1323" y="639" style="letter-spacing:-.45px">Stoc maxim</text><text x="1323" y="657" style="letter-spacing:-.6px">Stoc avertizare comanda</text>
</g>

<!-- tooltip -->
<rect x="917" y="689" width="142" height="104" rx="3" fill="#fff" stroke="#dcdcdc"/>
<text x="987" y="710" font-size="12" fill="#555" text-anchor="middle">08.02.2019</text>
<path d="M928 727.500H944" stroke="#0e6a12" stroke-width="1.200"/><circle cx="936" cy="727.500" r="4.500" fill="#0e6a12"/>
<path d="M928 750H944" stroke="#86c4ea" stroke-width="1.200"/><circle cx="936" cy="750" r="4.500" fill="#86c4ea"/>
<path d="M928 773H944" stroke="#f9a431" stroke-width="1.200"/><circle cx="936" cy="773" r="4" fill="#f9931a"/>
<g font-size="12" fill="#555"><text x="948" y="732" style="letter-spacing:-.45px">StocDisponibil : 138</text><text x="948" y="755">Intrari : 58</text><text x="948" y="778">Iesiri : 0</text></g>

<!-- cursor -->
<path d="M897.500 807V823L901 819.500L904 826L906.500 825L903.500 818.500H909Z" fill="#fff" stroke="#333" stroke-width="1"/>
</svg>

<div class="b" style="left:309px;top:1012px;width:1164px;height:26px;background:#343a46"></div>
<div class="b" style="left:1347px;top:1012px;width:1px;height:26px;background:#555b68"></div>
<div class="t" style="left:337px;top:1017px;color:#7f8a9e;letter-spacing:-.25px">Copiere link</div>
<svg width="1920" height="1080" viewBox="0 0 1920 1080"><rect x="319" y="1023" width="8" height="5.500" rx="2.700" fill="none" stroke="#9aa2b0" stroke-width="1.800"/><rect x="324" y="1023" width="8" height="5.500" rx="2.700" fill="none" stroke="#9aa2b0" stroke-width="1.800"/></svg>
</body></html>
